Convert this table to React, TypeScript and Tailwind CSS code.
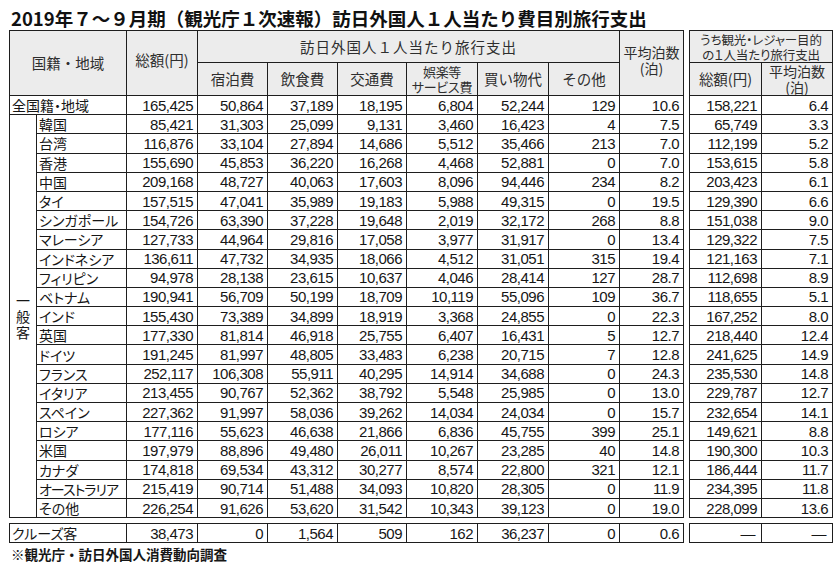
import React from 'react';

type Row = [string, ...string[]];

const ROWS: Row[] = [
  ['韓国', '85,421', '31,303', '25,099', '9,131', '3,460', '16,423', '4', '7.5', '65,749', '3.3'],
  ['台湾', '116,876', '33,104', '27,894', '14,686', '5,512', '35,466', '213', '7.0', '112,199', '5.2'],
  ['香港', '155,690', '45,853', '36,220', '16,268', '4,468', '52,881', '0', '7.0', '153,615', '5.8'],
  ['中国', '209,168', '48,727', '40,063', '17,603', '8,096', '94,446', '234', '8.2', '203,423', '6.1'],
  ['タイ', '157,515', '47,041', '35,989', '19,183', '5,988', '49,315', '0', '19.5', '129,390', '6.6'],
  ['シンガポール', '154,726', '63,390', '37,228', '19,648', '2,019', '32,172', '268', '8.8', '151,038', '9.0'],
  ['マレーシア', '127,733', '44,964', '29,816', '17,058', '3,977', '31,917', '0', '13.4', '129,322', '7.5'],
  ['インドネシア', '136,611', '47,732', '34,935', '18,066', '4,512', '31,051', '315', '19.4', '121,163', '7.1'],
  ['フィリピン', '94,978', '28,138', '23,615', '10,637', '4,046', '28,414', '127', '28.7', '112,698', '8.9'],
  ['ベトナム', '190,941', '56,709', '50,199', '18,709', '10,119', '55,096', '109', '36.7', '118,655', '5.1'],
  ['インド', '155,430', '73,389', '34,899', '18,919', '3,368', '24,855', '0', '22.3', '167,252', '8.0'],
  ['英国', '177,330', '81,814', '46,918', '25,755', '6,407', '16,431', '5', '12.7', '218,440', '12.4'],
  ['ドイツ', '191,245', '81,997', '48,805', '33,483', '6,238', '20,715', '7', '12.8', '241,625', '14.9'],
  ['フランス', '252,117', '106,308', '55,911', '40,295', '14,914', '34,688', '0', '24.3', '235,530', '14.8'],
  ['イタリア', '213,455', '90,767', '52,362', '38,792', '5,548', '25,985', '0', '13.0', '229,787', '12.7'],
  ['スペイン', '227,362', '91,997', '58,036', '39,262', '14,034', '24,034', '0', '15.7', '232,654', '14.1'],
  ['ロシア', '177,116', '55,623', '46,638', '21,866', '6,836', '45,755', '399', '25.1', '149,621', '8.8'],
  ['米国', '197,979', '88,896', '49,480', '26,011', '10,267', '23,285', '40', '14.8', '190,300', '10.3'],
  ['カナダ', '174,818', '69,534', '43,312', '30,277', '8,574', '22,800', '321', '12.1', '186,444', '11.7'],
  ['オーストラリア', '215,419', '90,714', '51,488', '34,093', '10,820', '28,305', '0', '11.9', '234,395', '11.8'],
  ['その他', '226,254', '91,626', '53,620', '31,542', '10,343', '39,123', '0', '19.0', '228,099', '13.6'],
];

const TOTAL: Row = ['全国籍・地域', '165,425', '50,864', '37,189', '18,195', '6,804', '52,244', '129', '10.6', '158,221', '6.4'];
const CRUISE: Row = ['クルーズ客', '38,473', '0', '1,564', '509', '162', '36,237', '0', '0.6', '—', '—'];

const jp = "[font-family:'Noto_Sans_CJK_JP',sans-serif]";
const palt = "[font-feature-settings:'palt']";
const cell = 'border border-[#1e1e1e] p-0 overflow-hidden whitespace-nowrap';
const num = `${cell} text-right pr-[4px] [font-family:'Liberation_Sans',Arial,sans-serif] text-[15px] tracking-[-0.5px] leading-none text-[#161616]`;
const name = `${cell} pl-[2px] text-left ${jp} text-[14px] leading-none text-[#161616] ${palt}`;
const head = `${cell} bg-[#ececec] text-center ${jp} text-[14.5px] text-[#2e2e2e] font-normal`;
const gap = 'border-0 p-0';

function Cols() {
  return (
    <colgroup>
      <col className="w-[27px]" />
      <col className="w-[90px]" />
      <col className="w-[71px]" />
      <col className="w-[70px]" />
      <col className="w-[70px]" />
      <col className="w-[69px]" />
      <col className="w-[71px]" />
      <col className="w-[71px]" />
      <col className="w-[71px]" />
      <col className="w-[64px]" />
      <col className="w-[6px]" />
      <col className="w-[72px]" />
      <col className="w-[71px]" />
    </colgroup>
  );
}

function Cells({ row }: { row: Row }) {
  return (
    <>
      {row.slice(1, 9).map((v, i) => (
        <td key={i} className={num}>
          {v}
        </td>
      ))}
      <td className={gap} />
      {row.slice(9).map((v, i) => (
        <td key={`r${i}`} className={v === '—' ? `${num} pr-[6px]` : num}>
          {v}
        </td>
      ))}
    </>
  );
}

// two stacked header lines, kept as separate blocks so they never overlap
function TwoLine({ a, b, className }: { a: string; b: string; className: string }) {
  return (
    <div className={`flex flex-col items-center ${className}`}>
      <span>{a}</span>
      <span>{b}</span>
    </div>
  );
}

export default function App() {
  return (
    <div className="w-[840px] h-[570px] bg-white pl-[9px] pt-[6px] text-[#161616]">
      <h1 className={`${jp} pl-[2px] text-[18.5px] font-bold leading-[24px] h-[24px] text-[#111]`}>
        2019年７～９月期（観光庁１次速報）訪日外国人１人当たり費目別旅行支出
      </h1>

      <table className="table-fixed border-collapse w-[823px]">
        <Cols />
        <thead>
          <tr className="h-[32px]">
            <th colSpan={2} rowSpan={2} className={head}>
              国籍・地域
            </th>
            <th rowSpan={2} className={`${head} pb-[6px]`}>
              総額(円)
            </th>
            <th colSpan={6} className={`${head} tracking-[1px]`}>
              訪日外国人１人当たり旅行支出
            </th>
            <th rowSpan={2} className={`${head} pb-[6px]`}>
              <TwoLine a="平均泊数" b="(泊)" className="text-[14px] leading-[16px]" />
            </th>
            <th rowSpan={2} className={gap} />
            <th colSpan={2} className={head}>
              <TwoLine
                a="うち観光・レジャー目的"
                b="の１人当たり旅行支出"
                className={`text-[12.5px] leading-[15px] tracking-[-0.1px] ${palt}`}
              />
            </th>
          </tr>
          <tr className="h-[33px]">
            <th className={head}>宿泊費</th>
            <th className={head}>飲食費</th>
            <th className={head}>交通費</th>
            <th className={head}>
              <TwoLine a="娯楽等" b="サービス費" className={`text-[13px] leading-[15px] tracking-[-0.3px] ${palt}`} />
            </th>
            <th className={head}>買い物代</th>
            <th className={head}>その他</th>
            <th className={head}>総額(円)</th>
            <th className={head}>
              <TwoLine a="平均泊数" b="(泊)" className="text-[14px] leading-[16px]" />
            </th>
          </tr>
        </thead>
        <tbody>
          <tr className="h-[19.2px]">
            <td colSpan={2} className={name}>
              {TOTAL[0]}
            </td>
            <Cells row={TOTAL} />
          </tr>
          {ROWS.map((r, i) => (
            <tr key={r[0]} className="h-[19.2px]">
              {i === 0 && (
                <td rowSpan={ROWS.length} className="border border-[#1e1e1e] p-0 align-middle">
                  <div className={`${jp} flex flex-col items-center text-[14px] leading-[16px] text-[#161616]`}>
                    <span>一</span>
                    <span>般</span>
                    <span>客</span>
                  </div>
                </td>
              )}
              <td className={r[0].length > 6 ? `${name} tracking-[-1px]` : name}>{r[0]}</td>
              <Cells row={r} />
            </tr>
          ))}
        </tbody>
      </table>

      <table className="mt-[5px] table-fixed border-collapse w-[823px]">
        <Cols />
        <tbody>
          <tr className="h-[19px]">
            <td colSpan={2} className={name}>
              {CRUISE[0]}
            </td>
            <Cells row={CRUISE} />
          </tr>
        </tbody>
      </table>

      <p className={`${jp} mt-[2px] pl-[2px] text-[13.5px] font-bold leading-[18px] text-[#161616]`}>
        ※観光庁・訪日外国人消費動向調査
      </p>
    </div>
  );
}
